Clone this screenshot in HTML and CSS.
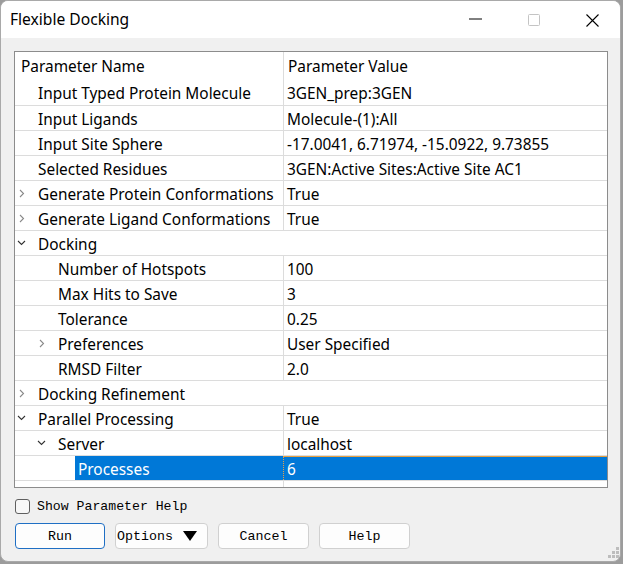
FILE: index.html
```html
<!DOCTYPE html>
<html>
<head>
<meta charset="utf-8">
<link rel="stylesheet" href="styles.css">
</head>
<body>
<div class="window">
  <div class="titlebar">
    <span class="title">Flexible Docking</span>
    <div class="controls">
      <svg class="ctl ctl-min" width="13" height="2" viewBox="0 0 13 2"><line x1="0" y1="1" x2="13" y2="1" stroke="#000" stroke-width="1"/></svg>
      <svg class="ctl ctl-max" width="12" height="12" viewBox="0 0 12 12"><rect x="0.5" y="0.5" width="11" height="11" rx="1" fill="none" stroke="#c4c4c4" stroke-width="1"/></svg>
      <svg class="ctl ctl-close" width="13" height="13" viewBox="0 0 13 13"><path d="M0.5 0.5 L12.5 12.5 M12.5 0.5 L0.5 12.5" stroke="#000" stroke-width="1.1" fill="none"/></svg>
    </div>
  </div>
  <div class="content">
    <div class="tree">
      <div class="row header">
        <div class="name">Parameter Name</div>
        <div class="value">Parameter Value</div>
      </div>
      <div class="row first">
        <div class="name"><span class="arrow"></span><span class="label">Input Typed Protein Molecule</span></div>
        <div class="value">3GEN_prep:3GEN</div>
      </div>
      <div class="row">
        <div class="name"><span class="arrow"></span><span class="label">Input Ligands</span></div>
        <div class="value">Molecule-(1):All</div>
      </div>
      <div class="row">
        <div class="name"><span class="arrow"></span><span class="label">Input Site Sphere</span></div>
        <div class="value">-17.0041, 6.71974, -15.0922, 9.73855</div>
      </div>
      <div class="row">
        <div class="name"><span class="arrow"></span><span class="label">Selected Residues</span></div>
        <div class="value">3GEN:Active Sites:Active Site AC1</div>
      </div>
      <div class="row">
        <div class="name"><span class="arrow"><svg class="closed" width="6" height="9" viewBox="0 0 6 9"><polyline points="1,1 4.5,4.5 1,8" fill="none" stroke="#8a8a8a" stroke-width="1.1"/></svg></span><span class="label">Generate Protein Conformations</span></div>
        <div class="value">True</div>
      </div>
      <div class="row">
        <div class="name"><span class="arrow"><svg class="closed" width="6" height="9" viewBox="0 0 6 9"><polyline points="1,1 4.5,4.5 1,8" fill="none" stroke="#8a8a8a" stroke-width="1.1"/></svg></span><span class="label">Generate Ligand Conformations</span></div>
        <div class="value">True</div>
      </div>
      <div class="row">
        <div class="name span"><span class="arrow"><svg class="open" width="9" height="6" viewBox="0 0 9 6"><polyline points="1,1 4.5,4.5 8,1" fill="none" stroke="#333" stroke-width="1.1"/></svg></span><span class="label">Docking</span></div>
      </div>
      <div class="row">
        <div class="name"><span class="indent1"></span><span class="arrow"></span><span class="label">Number of Hotspots</span></div>
        <div class="value">100</div>
      </div>
      <div class="row">
        <div class="name"><span class="indent1"></span><span class="arrow"></span><span class="label">Max Hits to Save</span></div>
        <div class="value">3</div>
      </div>
      <div class="row">
        <div class="name"><span class="indent1"></span><span class="arrow"></span><span class="label">Tolerance</span></div>
        <div class="value">0.25</div>
      </div>
      <div class="row">
        <div class="name"><span class="indent1"></span><span class="arrow"><svg class="closed" width="6" height="9" viewBox="0 0 6 9"><polyline points="1,1 4.5,4.5 1,8" fill="none" stroke="#8a8a8a" stroke-width="1.1"/></svg></span><span class="label">Preferences</span></div>
        <div class="value">User Specified</div>
      </div>
      <div class="row">
        <div class="name"><span class="indent1"></span><span class="arrow"></span><span class="label">RMSD Filter</span></div>
        <div class="value">2.0</div>
      </div>
      <div class="row">
        <div class="name span"><span class="arrow"><svg class="closed" width="6" height="9" viewBox="0 0 6 9"><polyline points="1,1 4.5,4.5 1,8" fill="none" stroke="#8a8a8a" stroke-width="1.1"/></svg></span><span class="label">Docking Refinement</span></div>
      </div>
      <div class="row">
        <div class="name"><span class="arrow"><svg class="open" width="9" height="6" viewBox="0 0 9 6"><polyline points="1,1 4.5,4.5 8,1" fill="none" stroke="#333" stroke-width="1.1"/></svg></span><span class="label">Parallel Processing</span></div>
        <div class="value">True</div>
      </div>
      <div class="row">
        <div class="name"><span class="indent1"></span><span class="arrow"><svg class="open" width="9" height="6" viewBox="0 0 9 6"><polyline points="1,1 4.5,4.5 8,1" fill="none" stroke="#333" stroke-width="1.1"/></svg></span><span class="label">Server</span></div>
        <div class="value">localhost</div>
      </div>
      <div class="row selected">
        <div class="name"><span class="indent2"></span><span class="arrow"></span><span class="label">Processes</span></div>
        <div class="value">6</div>
      </div>
      <div class="row filler">
        <div class="name"></div>
        <div class="value"></div>
      </div>
    </div>
    <label class="check"><span class="box"></span><span class="check-text">Show Parameter Help</span></label>
    <div class="buttons">
      <button class="btn default">Run</button>
      <button class="btn options">Options <svg class="tri" width="14" height="10" viewBox="0 0 14 10"><polygon points="0,0 14,0 7,10" fill="#000"/></svg></button>
      <button class="btn">Cancel</button>
      <button class="btn">Help</button>
    </div>
  </div>
  <div class="grip">
    <span class="dot d1"></span>
    <span class="dot d2"></span><span class="dot d3"></span>
    <span class="dot d4"></span><span class="dot d5"></span><span class="dot d6"></span>
  </div>
</div>
</body>
</html>
```
FILE: styles.css
```css
html, body {
  margin: 0;
  padding: 0;
}
body {
  background: #9c9c9c;
  width: 623px;
  height: 564px;
  overflow: hidden;
}
.window {
  position: relative;
  width: 621px;
  height: 562px;
  box-sizing: border-box;
  border: 1px solid #a9a9a9;
  border-radius: 8px;
  overflow: hidden;
  background: #f0f0f0;
  font-family: "Noto Sans", sans-serif;
  color: #000;
}
.titlebar {
  height: 37px;
  background: #fff;
  display: flex;
  align-items: center;
}
.title {
  padding-left: 9px;
  font-size: 15.6px;
  margin-top: -1px;
}
.controls {
  margin-left: auto;
  display: flex;
  align-items: center;
  height: 100%;
}
.ctl { display: block; }
.ctl-min { margin-right: 46px; margin-top: -1px; }
.ctl-max { margin-right: 46px; margin-top: 1px; }
.ctl-close { margin-right: 21px; margin-top: 1px; }

.content {
  padding: 13px 12px 0 13px;
}
.tree {
  width: 594px;
  height: 437px;
  box-sizing: border-box;
  border: 1px solid #8c8c8c;
  background: #fff;
  font-size: 15.4px;
}
.row {
  display: flex;
  height: 25px;
  box-sizing: border-box;
  border-top: 1px solid #dcdcdc;
}
.row.header {
  height: 28px;
  border-top: none;
}
.row.first {
  border-top: none;
}
.row.filler {
  height: 7px;
}
.name {
  width: 268px;
  box-sizing: border-box;
  flex: none;
  display: flex;
  align-items: center;
  white-space: nowrap;
  overflow: hidden;
}
.name.span {
  width: auto;
  flex: 1;
}
.value {
  flex: 1;
  border-left: 1px solid #dcdcdc;
  display: flex;
  align-items: center;
  padding-left: 3px;
  padding-top: 2px;
  box-sizing: border-box;
  white-space: nowrap;
}
.header .name { padding-left: 6px; padding-top: 1px; }
.header .value { padding-left: 4px; padding-top: 1px; }
.indent1 { width: 20px; flex: none; }
.indent2 { width: 40px; flex: none; }
.arrow {
  width: 20px;
  flex: none;
  display: flex;
  align-items: center;
  height: 100%;
}
.arrow svg { display: block; }
.arrow .closed { margin-left: 4px; }
.arrow .open { margin-left: 2px; }
.label {
  flex: 1;
  padding-left: 3px;
  padding-top: 2px;
  box-sizing: border-box;
  height: 100%;
  display: flex;
  align-items: center;
}
.selected .label {
  background: #0078d7;
  color: #fff;
}
.selected .value {
  background: #0078d7;
  color: #fff;
  border-left: 1px dotted #e8a040;
  box-shadow: inset 0 1px 0 0 #e8a040;
}

.check {
  display: flex;
  align-items: center;
  margin-top: 10px;
  height: 16px;
  font-family: "Liberation Mono", monospace;
  font-size: 13.2px;
}
.box {
  width: 15px;
  height: 15px;
  box-sizing: border-box;
  border: 1px solid #5f5f5f;
  border-radius: 3px;
  background: #f7f7f7;
  margin-left: 1px;
  margin-right: 7px;
}
.buttons {
  display: flex;
  gap: 10px;
  margin-top: 9px;
  padding-left: 1px;
}
.btn {
  width: 91px;
  height: 26px;
  box-sizing: border-box;
  background: #fdfdfd;
  border: 1px solid #d0d0d0;
  border-radius: 4px;
  font-family: "Liberation Mono", monospace;
  font-size: 13.3px;
  color: #000;
  padding: 0;
  display: flex;
  align-items: center;
  justify-content: center;
}
.btn.default {
  border-color: #1f6fc4;
  width: 90px;
}
.btn.options {
  width: 93px;
  justify-content: flex-start;
  padding-left: 1px;
  white-space: pre;
}
.tri {
  display: block;
  margin-left: 2px;
}
.grip {
  position: absolute;
  right: 0;
  bottom: 0;
  width: 14px;
  height: 14px;
}
.dot {
  position: absolute;
  width: 3px;
  height: 3px;
  background: #bdbdbd;
}
.d1 { right: 1px; top: 0; }
.d2 { right: 5px; top: 4px; }
.d3 { right: 1px; top: 4px; }
.d4 { right: 9px; top: 8px; }
.d5 { right: 5px; top: 8px; }
.d6 { right: 1px; top: 8px; }
```
